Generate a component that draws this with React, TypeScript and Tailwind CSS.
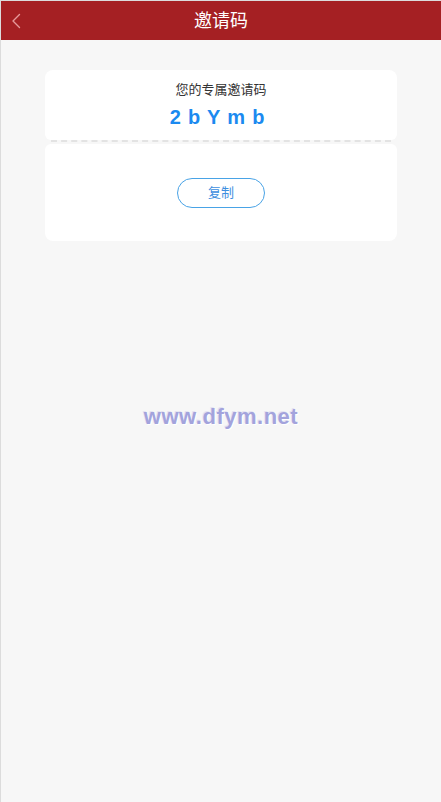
import React from "react";

export default function App() {
  const code = "2bYmb";

  return (
    <div className="min-h-screen bg-[#f7f7f7] border-l border-t border-[#dcdcdc] font-['Liberation_Sans','Noto_Sans_CJK_SC',sans-serif]">
      {/* Header */}
      <div className="relative h-[39px] bg-[#a52023] flex items-center justify-center">
        <button className="absolute left-[8px] top-[11px] w-[14px] h-[18px] flex items-center justify-center">
          <svg width="10" height="16" viewBox="0 0 10 16" fill="none">
            <path d="M8.5 1.5 L2 8 L8.5 14.5" stroke="#e69a9a" strokeWidth="1.4" strokeLinecap="round" strokeLinejoin="round" />
          </svg>
        </button>
        <h1 className="text-white text-[18px] leading-none">邀请码</h1>
      </div>

      {/* Card */}
      <div className="mx-[44px] mt-[30px]">
        <div className="bg-white rounded-t-[8px] rounded-b-[6px] h-[70px] flex flex-col items-center pt-[11px]">
          <div className="text-[13px] text-[#333] leading-[17px]">您的专属邀请码</div>
          <div className="mt-[8px] mr-[7px] text-[20px] font-bold text-[#1b8af0] leading-[22px] tracking-[0.8px]">
            {code.split("").join(" ")}
          </div>
        </div>
        <div className="h-[4px] mx-[6px] border-t-2 border-dashed border-[#e3e3e3]" />
        <div className="bg-white rounded-t-[6px] rounded-b-[8px] h-[97px] flex items-center justify-center">
          <button className="w-[88px] h-[30px] rounded-full border border-[#49a3e6] text-[13px] text-[#3d8fe0]">
            复制
          </button>
        </div>
      </div>

      {/* Watermark */}
      <div className="mt-[159px] flex justify-center">
        <span className="text-[22px] font-bold text-[#a3a3dc] tracking-[0.5px] [text-shadow:1px_1px_0_#fff,-1px_-1px_0_#e4e4f2]">
          www.dfym.net
        </span>
      </div>
    </div>
  );
}
